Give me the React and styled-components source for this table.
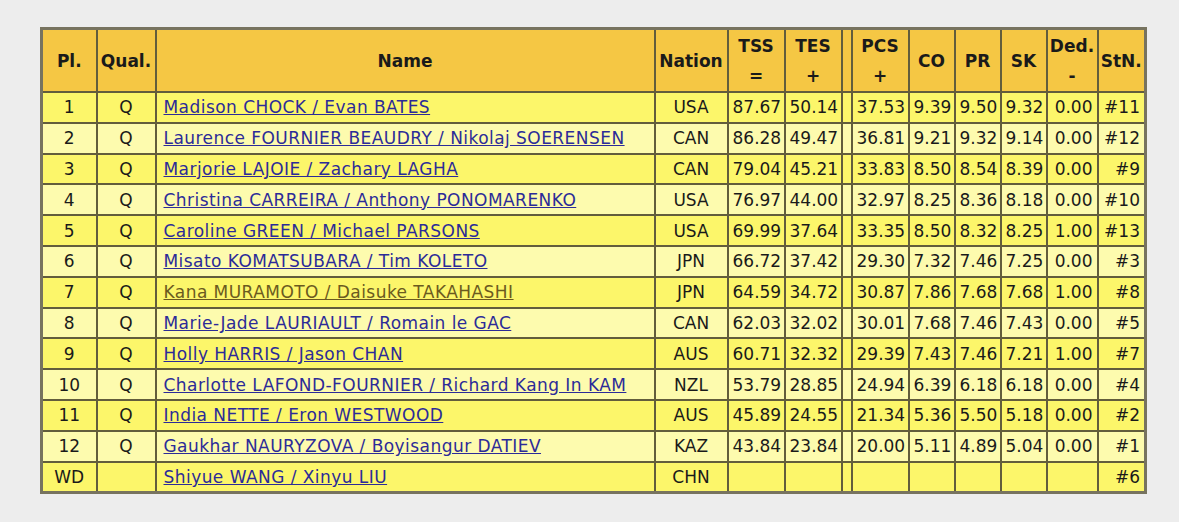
import React from "react";
import styled, { createGlobalStyle } from "styled-components";

const GlobalStyle = createGlobalStyle`
    html, body {
        margin: 0;
        padding: 0;
        background: #ededed;
    }
`;

const Page = styled.div`
    padding: 27px 0 0 40px;
    font-family: "DejaVu Sans", Verdana, sans-serif;
    color: #1a1a1a;
`;

const Table = styled.table`
    border-collapse: collapse;
    table-layout: fixed;
    width: 1107px;
    border: 3px solid #77735f;
    font-size: 17px;
`;

const HeadCell = styled.th`
    background: #f5c744;
    border: 2px solid #625d3c;
    height: 61px;
    padding: 0;
    font-weight: bold;
    text-align: center;
    vertical-align: middle;
    line-height: ${props => (props.$two ? "30px" : "20px")};
`;

const Row = styled.tr`
    background: ${props => (props.$odd ? "#fcf66a" : "#fdfbae")};
`;

const Cell = styled.td`
    border: 2px solid #625d3c;
    height: 28.8px;
    padding: 0 ${props => (props.$align === "left" ? "7px" : "4px")};
    line-height: 20px;
    text-align: ${props => props.$align || "center"};
    white-space: nowrap;
    overflow: hidden;
`;

const NameLink = styled.a`
    color: ${props => (props.$visited ? "#6b5a1f" : "#2c2b98")};
    text-decoration: underline;
    letter-spacing: 0.45px;
`;

const widths = [55, 59, 499, 73, 57, 57, 10, 57, 46, 46, 46, 51, 48];

const rows = [
    ["1", "Q", "Madison CHOCK / Evan BATES", "USA", "87.67", "50.14", "37.53", "9.39", "9.50", "9.32", "0.00", "#11"],
    ["2", "Q", "Laurence FOURNIER BEAUDRY / Nikolaj SOERENSEN", "CAN", "86.28", "49.47", "36.81", "9.21", "9.32", "9.14", "0.00", "#12"],
    ["3", "Q", "Marjorie LAJOIE / Zachary LAGHA", "CAN", "79.04", "45.21", "33.83", "8.50", "8.54", "8.39", "0.00", "#9"],
    ["4", "Q", "Christina CARREIRA / Anthony PONOMARENKO", "USA", "76.97", "44.00", "32.97", "8.25", "8.36", "8.18", "0.00", "#10"],
    ["5", "Q", "Caroline GREEN / Michael PARSONS", "USA", "69.99", "37.64", "33.35", "8.50", "8.32", "8.25", "1.00", "#13"],
    ["6", "Q", "Misato KOMATSUBARA / Tim KOLETO", "JPN", "66.72", "37.42", "29.30", "7.32", "7.46", "7.25", "0.00", "#3"],
    ["7", "Q", "Kana MURAMOTO / Daisuke TAKAHASHI", "JPN", "64.59", "34.72", "30.87", "7.86", "7.68", "7.68", "1.00", "#8"],
    ["8", "Q", "Marie-Jade LAURIAULT / Romain le GAC", "CAN", "62.03", "32.02", "30.01", "7.68", "7.46", "7.43", "0.00", "#5"],
    ["9", "Q", "Holly HARRIS / Jason CHAN", "AUS", "60.71", "32.32", "29.39", "7.43", "7.46", "7.21", "1.00", "#7"],
    ["10", "Q", "Charlotte LAFOND-FOURNIER / Richard Kang In KAM", "NZL", "53.79", "28.85", "24.94", "6.39", "6.18", "6.18", "0.00", "#4"],
    ["11", "Q", "India NETTE / Eron WESTWOOD", "AUS", "45.89", "24.55", "21.34", "5.36", "5.50", "5.18", "0.00", "#2"],
    ["12", "Q", "Gaukhar NAURYZOVA / Boyisangur DATIEV", "KAZ", "43.84", "23.84", "20.00", "5.11", "4.89", "5.04", "0.00", "#1"],
    ["WD", "", "Shiyue WANG / Xinyu LIU", "CHN", "", "", "", "", "", "", "", "#6"],
];

const App = () => {
    return (
        <Page>
            <GlobalStyle />
            <Table>
                <colgroup>
                    {widths.map((w, i) => (
                        <col key={i} style={{ width: w }} />
                    ))}
                </colgroup>
                <thead>
                    <tr>
                        <HeadCell>Pl.</HeadCell>
                        <HeadCell>Qual.</HeadCell>
                        <HeadCell>Name</HeadCell>
                        <HeadCell>Nation</HeadCell>
                        <HeadCell $two>TSS<br />=</HeadCell>
                        <HeadCell $two>TES<br />+</HeadCell>
                        <HeadCell />
                        <HeadCell $two>PCS<br />+</HeadCell>
                        <HeadCell>CO</HeadCell>
                        <HeadCell>PR</HeadCell>
                        <HeadCell>SK</HeadCell>
                        <HeadCell $two>Ded.<br />-</HeadCell>
                        <HeadCell>StN.</HeadCell>
                    </tr>
                </thead>
                <tbody>
                    {rows.map((r, i) => (
                        <Row key={r[2]} $odd={i % 2 === 0}>
                            <Cell>{r[0]}</Cell>
                            <Cell>{r[1]}</Cell>
                            <Cell $align="left">
                                <NameLink href="#" $visited={r[0] === "7"}>{r[2]}</NameLink>
                            </Cell>
                            <Cell>{r[3]}</Cell>
                            <Cell $align="right">{r[4]}</Cell>
                            <Cell $align="right">{r[5]}</Cell>
                            <Cell />
                            <Cell $align="right">{r[6]}</Cell>
                            <Cell $align="right">{r[7]}</Cell>
                            <Cell $align="right">{r[8]}</Cell>
                            <Cell $align="right">{r[9]}</Cell>
                            <Cell $align="right">{r[10]}</Cell>
                            <Cell $align="right">{r[11]}</Cell>
                        </Row>
                    ))}
                </tbody>
            </Table>
        </Page>
    );
};

export default App;
